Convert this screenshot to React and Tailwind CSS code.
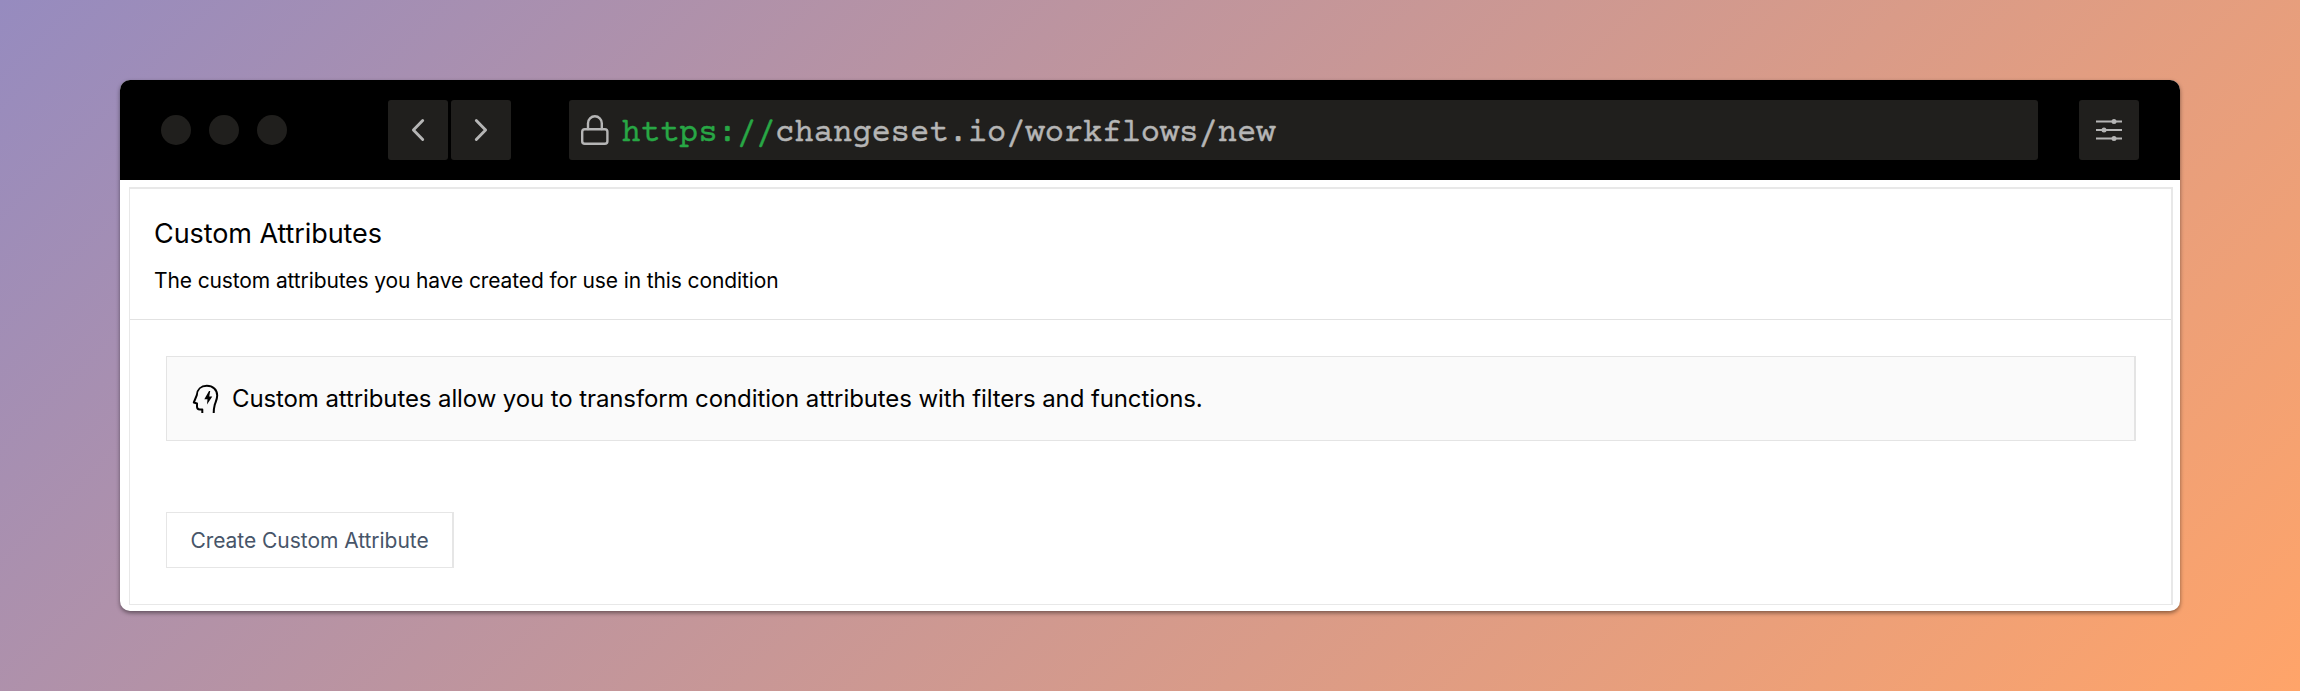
const chip = "bg-[#201f1d] rounded-[3px]";

function Icon({ className, children, viewBox, strokeWidth = 2 }) {
  return (
    <svg className={className} viewBox={viewBox} fill="none" stroke="currentColor" strokeWidth={strokeWidth} strokeLinecap="round" strokeLinejoin="round">
      {children}
    </svg>
  );
}

function TitleBar() {
  return (
    <header className="flex h-[100px] shrink-0 items-center bg-black pr-[41px] pl-[41px] text-[#b5b5b5]">
      <div className="flex gap-[18px]">
        <span className="size-[30px] rounded-full bg-[#201f1d]" />
        <span className="size-[30px] rounded-full bg-[#201f1d]" />
        <span className="size-[30px] rounded-full bg-[#201f1d]" />
      </div>
      <div className="ml-[101px] flex gap-[3px]">
        <button className={chip}>
          <Icon className="size-[60px]" viewBox="0 0 60 60" strokeWidth={2.9}>
            <path d="M34.7 20.5 25.4 30l9.3 9.5" />
          </Icon>
        </button>
        <button className={chip}>
          <Icon className="size-[60px]" viewBox="0 0 60 60" strokeWidth={2.9}>
            <path d="M25.3 20.5 34.6 30l-9.3 9.5" />
          </Icon>
        </button>
      </div>
      <div className="ml-[58px] flex h-[60px] flex-1 items-center rounded-[3px] bg-[#201f1d] pl-[11px]">
        <Icon className="h-[32px] w-[30px]" viewBox="0 0 30 32" strokeWidth={2.4}>
          <rect x="2.2" y="15.2" width="25.2" height="14.6" rx="2.6" />
          <path d="M8 15V9.2a6.9 6.9 0 0 1 13.8 0V15" />
        </Icon>
        <p className="ml-[11.5px] pt-[8px] font-['Courier_Prime','Liberation_Mono',monospace] text-[32.1px] leading-none whitespace-nowrap [-webkit-text-stroke:0.4px_currentColor]">
          <span className="text-[#28a745]">https://</span>changeset.io/workflows/new
        </p>
      </div>
      <button className="ml-[41px] rounded-[3px] bg-[#201f1d]">
        <svg className="size-[60px]" viewBox="0 0 60 60" fill="#b5b5b5">
          <path d="M17 20.4h26v2H17zM17 29h26v2H17zM17 37.6h26v2H17z" />
          <circle cx="35" cy="21.4" r="2.5" />
          <circle cx="25" cy="30" r="2.5" />
          <circle cx="35" cy="38.6" r="2.5" />
        </svg>
      </button>
    </header>
  );
}

export default function App() {
  return (
    <div className="h-[691px] w-[2300px] bg-[linear-gradient(135deg,#968bbf_0%,#ffa469_100%)] px-[120px] py-[80px] font-['Inter',sans-serif] text-black">
      <main className="flex h-[531px] flex-col overflow-hidden rounded-[10px] bg-white shadow-[0_2px_4px_rgba(0,0,0,0.45)]">
        <TitleBar />
        <section className="mt-[7px] mr-[7px] mb-[6px] ml-[9px] flex-1 border-t-2 border-r-2 border-b border-l border-[#e8e8e8]">
          <div className="h-[131px] border-b border-[#e2e2e2] pt-[24px] pl-[24px]">
            <h1 className="text-[27px] leading-[42px] tracking-[-0.08px]">Custom Attributes</h1>
            <p className="mt-[10px] text-[21px] leading-[31px] tracking-[-0.115px]">The custom attributes you have created for use in this condition</p>
          </div>
          <div className="py-[36px] pr-[35px] pl-[36px]">
            <div className="flex h-[85px] items-center border border-r-2 border-[#e4e4e4] bg-[#fafafa] pl-[25px]">
              <svg className="h-[30px] w-[28px]" viewBox="0 0 28 30" fill="none" stroke="black" strokeWidth="2" strokeLinejoin="round">
                <path d="M10.3 29v-3.6H7.8c-1.7 0-2.8-1-2.8-2.6v-3.3l-3.2-1L4.8 11.2C5.1 5.5 9 1.8 14.8 1.8c6.2 0 10.4 4 10.4 9.8 0 3.6-1.5 6-2.5 9.3-.7 2.6-1 4.8-1 8.1" />
                <path d="M17 6.9 12.3 15.3h3.2L15 20.4 20.3 12.5H17.2L18.2 6.900Z" fill="black" stroke="none" />
              </svg>
              <p className="ml-[12px] text-[24px] tracking-[-0.105px]">Custom attributes allow you to transform condition attributes with filters and functions.</p>
            </div>
            <button className="mt-[71px] flex h-[56px] w-[288px] items-center justify-center border-t border-r-2 border-b border-l border-[#e6e6e6] pt-px text-[21px] tracking-[-0.04px] whitespace-nowrap text-[#475569]">
              Create Custom Attribute
            </button>
          </div>
        </section>
      </main>
    </div>
  );
}
